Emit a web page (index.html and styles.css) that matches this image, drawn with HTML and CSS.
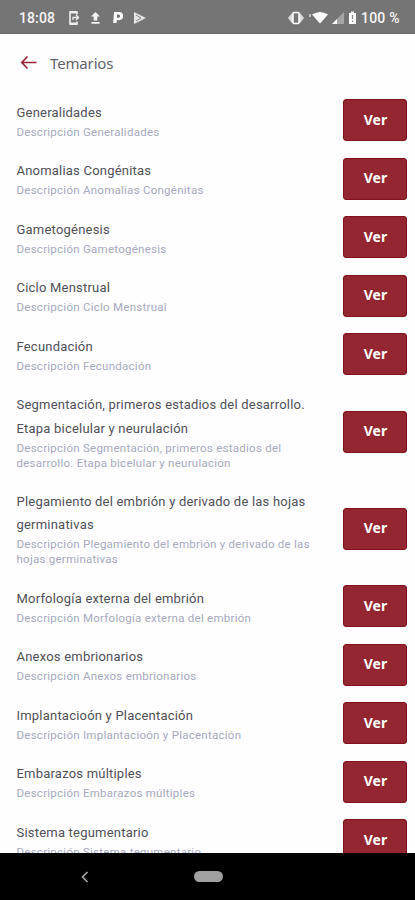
FILE: index.html
```html
<!DOCTYPE html>
<html lang="es">
<head>
<meta charset="utf-8">
<title>Temarios</title>
<link rel="stylesheet" href="styles.css">
</head>
<body>
<div class="status">
  <span class="time">18:08</span>
  <svg class="status-left" width="80" height="18" viewBox="0 0 80 18">
    <g fill="none" stroke="#eee" stroke-width="1.600">
      <path d="M10 5.500V3H3v12h7v-2.500"/><path d="M3 3.200h7M3 14.800h7" stroke-width="2.400"/>
      <path d="M6 11V8.500h4.500M9 6l2.500 2.500L9 11" stroke-width="1.300"/>
    </g>
    <path d="M28.500 3l4.500 4.500h-2.700v4h-3.600v-4H24zM24.500 13h8v1.800h-8z" fill="#f4f4f4"/>
    <path d="M47 3h5a4 4 0 0 1 0 8.200h-2.200l-.3 2.800h-3.300zM50 5.600v3.200h1.500a1.600 1.600 0 0 0 0-3.200z" fill="#fff" fill-rule="evenodd"/>
    <path d="M67 3l12 6-12 6z" fill="#e5e5e5"/><path d="M69 6l5 3-5 3" fill="none" stroke="#8b8b8b"/>
  </svg>
  <svg class="status-right" width="72" height="18" viewBox="0 0 72 18">
    <path d="M1 9l4-5h8l4 5-4 5H5z" fill="#ddd"/><rect x="6" y="3.500" width="6" height="11" rx="1" fill="#777" stroke="#fff" stroke-width="1.500"/>
    <path d="M23 5v3" stroke="#ddd" stroke-width="1.400"/>
    <path d="M25 5.500q8-5 16 0l-8 9z" fill="#fff"/>
    <path d="M57 3v12H45z" fill="#a5a5a5"/><path d="M50 10v5h-5z" fill="#fff"/>
    <path d="M62 4h2V2.500h3V4h2v11h-7z" fill="#fff"/><path d="M65.500 6v4M65.500 11.500v1.500" stroke="#888" stroke-width="1.300"/>
  </svg>
  <span class="battery">100 %</span>
</div>
<header class="bar">
  <svg width="18" height="16" viewBox="0 0 18 16" fill="none" stroke="#9c2638" stroke-width="1.700"><path d="M16.500 7.500H2M7.500 1.500L1.800 7.500l5.700 6"/></svg>
  <h1>Temarios</h1>
</header>
<main class="list">
  <section class="item"><div class="text"><h2>Generalidades</h2><p>Descripción Generalidades</p></div><button>Ver</button></section>
  <section class="item"><div class="text"><h2>Anomalias Congénitas</h2><p>Descripción Anomalias Congénitas</p></div><button>Ver</button></section>
  <section class="item"><div class="text"><h2>Gametogénesis</h2><p>Descripción Gametogénesis</p></div><button>Ver</button></section>
  <section class="item"><div class="text"><h2>Ciclo Menstrual</h2><p>Descripción Ciclo Menstrual</p></div><button>Ver</button></section>
  <section class="item"><div class="text"><h2>Fecundación</h2><p>Descripción Fecundación</p></div><button>Ver</button></section>
  <section class="item"><div class="text"><h2>Segmentación, primeros estadios del desarrollo.<br>Etapa bicelular y neurulación</h2><p>Descripción Segmentación, primeros estadios del<br>desarrollo. Etapa bicelular y neurulación</p></div><button>Ver</button></section>
  <section class="item"><div class="text"><h2>Plegamiento del embrión y derivado de las hojas<br>germinativas</h2><p>Descripción Plegamiento del embrión y derivado de las<br>hojas germinativas</p></div><button>Ver</button></section>
  <section class="item"><div class="text"><h2>Morfología externa del embrión</h2><p>Descripción Morfología externa del embrión</p></div><button>Ver</button></section>
  <section class="item"><div class="text"><h2>Anexos embrionarios</h2><p>Descripción Anexos embrionarios</p></div><button>Ver</button></section>
  <section class="item"><div class="text"><h2>Implantacioón y Placentación</h2><p>Descripción Implantacioón y Placentación</p></div><button>Ver</button></section>
  <section class="item"><div class="text"><h2>Embarazos múltiples</h2><p>Descripción Embarazos múltiples</p></div><button>Ver</button></section>
  <section class="item"><div class="text"><h2>Sistema tegumentario</h2><p>Descripción Sistema tegumentario</p></div><button>Ver</button></section>
</main>
<nav class="nav">
  <svg width="8" height="12" viewBox="0 0 8 12" fill="none" stroke="#aaa" stroke-width="1.600"><path d="M6.500 1L1.500 6l5 5"/></svg>
  <span class="home"></span>
</nav>
</body>
</html>
```
FILE: styles.css
```css
* { box-sizing: border-box; }
body {
  margin: 0;
  height: 900px;
  display: flex;
  flex-direction: column;
  overflow: hidden;
  background: #fefefe;
  font-family: Roboto, "Liberation Sans", sans-serif;
}
.status {
  height: 34px;
  flex: none;
  display: flex;
  align-items: center;
  padding: 2px 15px 0 19px;
  background: #757575;
  border-bottom: 1px solid #696969;
  color: #f5f5f5;
  font-size: 14px;
  font-weight: 500;
}
.time { width: 48px; letter-spacing: 0.1px; }
.status-right { margin-left: auto; }
.battery { width: 39px; margin-left: 2px; white-space: nowrap; letter-spacing: 0.2px; }
.bar {
  height: 57px;
  flex: none;
  display: flex;
  align-items: center;
  gap: 12px;
  padding-left: 20px;
}
h1 {
  margin: 0;
  font: 400 15px "Noto Sans", sans-serif;
  letter-spacing: -0.15px;
  color: #62626a;
}
.list { flex: 1; min-height: 0; overflow: hidden; }
.item {
  display: flex;
  align-items: center;
  justify-content: space-between;
  min-height: 58.5px;
  padding: 9.5px 8px 9.5px 16.5px;
}
.text { white-space: nowrap; }
h2 {
  margin: 0;
  font-size: 13px;
  font-weight: 400;
  line-height: 23.5px;
  letter-spacing: 0.21px;
  color: #505058;
}
p {
  margin: 0.7px 0 0;
  font-size: 11.5px;
  line-height: 15px;
  letter-spacing: 0.26px;
  color: #a6a9c0;
}
button {
  width: 64px;
  height: 42px;
  margin: -2px 0;
  padding: 0 0 2px 1px;
  flex: none;
  border: 1px solid #85101d;
  border-radius: 3px;
  background: #932630;
  color: #fff;
  font: 700 14px "Noto Sans", sans-serif;
}
.nav {
  height: 47px;
  flex: none;
  display: flex;
  align-items: center;
  padding-left: 81px;
  background: #000;
}
.home {
  width: 29px;
  height: 11px;
  margin-left: 105px;
  border-radius: 6px;
  background: #a0a0a0;
}
```
